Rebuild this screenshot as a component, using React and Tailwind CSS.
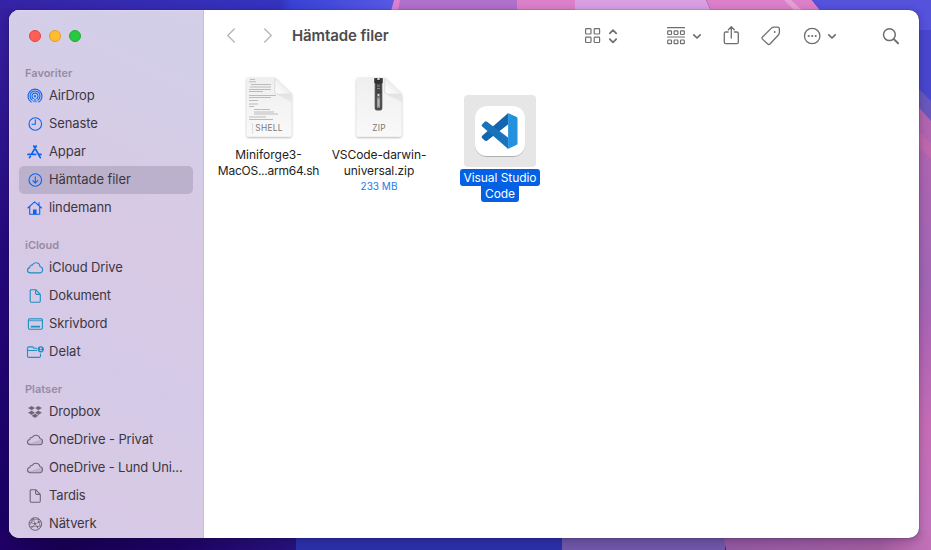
import React from "react";

function Wallpaper() {
  return (
    <svg className="absolute inset-0" width="931" height="550" viewBox="0 0 931 550">
      <defs>
        <linearGradient id="topBlue" x1="0" x2="1">
          <stop offset="0" stopColor="#3423a5" />
          <stop offset=".7" stopColor="#3533bf" />
          <stop offset=".73" stopColor="#3842d5" />
          <stop offset="1" stopColor="#5a5ae6" />
        </linearGradient>
        <linearGradient id="leftBlue" x1="0" x2="0" y1="0" y2="1">
          <stop offset="0" stopColor="#35209f" />
          <stop offset=".18" stopColor="#2f1792" />
          <stop offset=".45" stopColor="#25087c" />
          <stop offset="1" stopColor="#1a0060" />
        </linearGradient>
        <linearGradient id="bottomPurple" x1="0" x2="1">
          <stop offset="0" stopColor="#1f0066" />
          <stop offset=".2" stopColor="#180050" />
          <stop offset=".6" stopColor="#1d0361" />
          <stop offset="1" stopColor="#27127b" />
        </linearGradient>
        <linearGradient id="bottomPink" x1="0" x2="1">
          <stop offset="0" stopColor="#91589f" />
          <stop offset=".75" stopColor="#9f5c9d" />
          <stop offset="1" stopColor="#c371b8" />
        </linearGradient>
        <linearGradient id="rightPink" x1="0" x2="0" y1="0" y2="1">
          <stop offset="0" stopColor="#b464af" />
          <stop offset=".4" stopColor="#a166b5" />
          <stop offset=".5" stopColor="#ac64b4" />
          <stop offset=".72" stopColor="#c56cb5" />
          <stop offset="1" stopColor="#c173bd" />
        </linearGradient>
      </defs>
      <rect width="931" height="550" fill="#25107a" />
      <rect width="400" height="30" fill="url(#topBlue)" />
      <path d="M394 0h10l-6 30h-12z" fill="#dc80cf" />
      <path d="M400 0H517V30H395z" fill="#b070cb" />
      <path d="M517 0h60v30h-60z" fill="#dc80c9" />
      <path d="M575 0H706L720 30H575z" fill="#d8a0e3" />
      <path d="M706 0H812L836 30H720z" fill="#dc80c9" />
      <path d="M784 0h7l17 16h-8z" fill="#e5a0d6" />
      <path d="M812 0H931V130H915V30H836z" fill="#5552dc" />
      <path d="M915 30h16v100h-16z" fill="#4846cd" />
      <rect x="0" width="12" height="550" y="8" fill="url(#leftBlue)" />
      <path d="M915 85L931 101V550H915z" fill="#6858bd" />
      <path d="M915 103L931 121V550H915z" fill="url(#rightPink)" />
      <path d="M915 128l16 15v16l-16-16z" fill="#be67ad" />
      <rect y="530" width="297" height="20" fill="url(#bottomPurple)" />
      <rect x="296" y="530" width="267" height="20" fill="#2b30a7" />
      <rect x="562" y="530" width="163" height="20" fill="#7056a6" />
      <path d="M722 530H931V550H726z" fill="url(#bottomPink)" />
    </svg>
  );
}

const paths = {
  airdrop: (
    <>
      <path d="M4.2 14A7 7 0 1 1 11.8 14M5.2 12.1a5 5 0 1 1 5.6 0M6.2 10.5a3 3 0 1 1 3.6 0" />
      <circle cx="8" cy="8.2" r="1.1" fill="currentColor" stroke="none" />
      <path d="M8 9.5L5.6 14.3h4.8z" fill="currentColor" stroke="none" opacity=".55" />
    </>
  ),
  clock: (
    <>
      <circle cx="8.3" cy="8" r="6.3" />
      <path d="M8.3 3.8V8.3H5" />
    </>
  ),
  apps: (
    <g strokeWidth="1.7">
      <path d="M9.2 2L4.4 10.4M6.8 2l6.5 11.7M1 10.4h7.6M11.5 10.4H14M3.3 12.3l-.8 1.4" />
    </g>
  ),
  download: (
    <>
      <circle cx="8.3" cy="8" r="6.3" />
      <path d="M8.3 4.7v6.2M5.8 8.6l2.5 2.5 2.5-2.5" />
    </>
  ),
  home: (
    <>
      <path d="M.8 8L7.6 1.9 14.6 8M2.7 7v7.2h10V7M12 5.4V2.6" />
      <path d="M6 9.4h3.6v4.8H6z" fill="currentColor" stroke="none" />
    </>
  ),
  cloud: (
    <path d="M3.7 12.9C1.8 12.9.5 11.8.5 10.2c0-1.4 1-2.4 2.3-2.6C2.8 5.8 4 5 5.2 5.2 6 3.500 7.200 2.700 8.900 2.700c2.200 0 3.900 1.600 4 3.800 1.600.3 2.700 1.500 2.700 3.200 0 1.900-1.400 3.200-3.200 3.200z" />
  ),
  graycloud: (
    <>
      <path d="M3.700 12.700C1.800 12.700.5 11.700.5 10.100c0-1.400 1-2.400 2.400-2.600C3 6 4.100 5.100 5.400 5.300 6.200 3.700 7.500 3.200 8.900 3.200c2.100 0 3.600 1.300 3.900 3.300 1.600.2 2.700 1.400 2.700 3.100 0 1.900-1.300 3.100-3.100 3.100z" />
      <path d="M1.200 11.300C5 10.700 8 9.300 14.700 7.800l.2 2.500-1.500 1.900H3z" fill="currentColor" opacity=".22" stroke="none" />
    </>
  ),
  doc: (
    <path d="M4.400 1.700h4.300l4.600 4.600v6.700q0 1.200-1.200 1.200H4.400q-1.200 0-1.200-1.200V2.900q0-1.200 1.200-1.200zM8.600 1.900v3.300q0 1.200 1.200 1.200h3.300" />
  ),
  desktop: (
    <>
      <rect x="1.400" y="2.700" width="14" height="10.600" rx="1.200" />
      <path d="M1.700 4.500h13.500" strokeWidth="1.500" opacity=".65" />
      <path d="M4.500 10.700h7.800" strokeWidth="1.700" />
    </>
  ),
  shared: (
    <>
      <path d="M9.800 4.300H7L5.800 2.900H2q-1.500 0-1.500 1.500v7.500q0 1.500 1.500 1.500h10q1.500 0 1.500-1.500V10M.7 6.500h9" />
      <circle cx="13.800" cy="5.300" r="3.100" fill="currentColor" stroke="none" />
      <circle cx="13.800" cy="4.500" r=".9" fill="#d8cae6" stroke="none" />
      <path d="M12.200 6.900q1.600-1.600 3.200 0z" fill="#d8cae6" stroke="none" />
    </>
  ),
  dropbox: (
    <path
      d="M4.700 1.900L8 4.100 4.700 6.300.9 4.100zM11.300 1.900l3.800 2.200-3.800 2.200L8 4.100zM4.700 6.500L8 8.700l-3.300 2.200L.9 8.700zM11.300 6.500l3.800 2.200-3.800 2.200L8 8.700zM4.500 11.700L8 9.500l3.500 2.200L8 14z"
      fill="currentColor"
      stroke="#d8cae6"
      strokeWidth=".25"
    />
  ),
  network: (
    <>
      <circle cx="8.300" cy="8" r="6.300" strokeWidth="1" />
      <path d="M2.400 6.300L8 7.800l5.800-2.300M8 7.800L6.200 2.100M8 7.800l3.600 5.200M8 7.800L4.200 12.500M4.400 3.200l7.600.2M3.300 10.700l10.600-.5M6.300 2.300L3 8.500M11.300 2.800l1.900 8" strokeWidth=".65" />
      <g fill="currentColor" stroke="none">
        <circle cx="8" cy="7.800" r="1.100" />
        <circle cx="5" cy="5" r=".8" />
        <circle cx="11.500" cy="5.800" r=".9" />
        <circle cx="10.500" cy="10.800" r=".9" />
        <circle cx="5" cy="10.600" r=".8" />
      </g>
    </>
  ),
};

function SideIcon({ name, color }) {
  return (
    <svg
      className={`shrink-0 overflow-visible ${color}`}
      width="16"
      height="16"
      viewBox="0 0 16 16"
      fill="none"
      stroke="currentColor"
      strokeWidth="1.1"
      strokeLinecap="round"
      strokeLinejoin="round"
    >
      {paths[name]}
    </svg>
  );
}

const sections = [
  {
    title: "Favoriter",
    color: "text-[#0a64f0]",
    items: [
      ["airdrop", "AirDrop", "tracking-[-0.25px]"],
      ["clock", "Senaste", "tracking-[-0.1px]"],
      ["apps", "Appar", "tracking-[-0.1px]"],
      ["download", "Hämtade filer", "tracking-[-0.08px]"],
      ["home", "lindemann", "tracking-[-0.1px]"],
    ],
  },
  {
    title: "iCloud",
    color: "text-[#1d8fc0]",
    items: [
      ["cloud", "iCloud Drive", "tracking-[-0.12px]"],
      ["doc", "Dokument", "tracking-[-0.13px]"],
      ["desktop", "Skrivbord", "tracking-[-0.12px]"],
      ["shared", "Delat", "tracking-normal"],
    ],
  },
  {
    title: "Platser",
    color: "text-[#6d6574]",
    items: [
      ["dropbox", "Dropbox", "tracking-[-0.12px]"],
      ["graycloud", "OneDrive - Privat", "tracking-[-0.12px]"],
      ["graycloud", "OneDrive - Lund Uni...", "tracking-[-0.15px]"],
      ["doc", "Tardis", "tracking-[-0.15px]"],
      ["network", "Nätverk", "tracking-[-0.15px]"],
    ],
  },
];

function Sidebar() {
  return (
    <aside className="h-full w-[195px] shrink-0 overflow-hidden border-r border-[#c9bdd3] bg-[linear-gradient(205deg,#d2cfe7_0%,#d5cde7_22%,#d8c9e4_42%,#d4cae8_65%,#d8cae5_82%,#d5c9e5_100%)] shadow-[inset_1px_1px_0_#e0d5ee]">
      <div className="flex h-[54px] gap-2 pl-5 pt-5">
        <span className="size-3 rounded-full border border-[#e0443e] bg-[#ff5f57]" />
        <span className="size-3 rounded-full border border-[#e0a028] bg-[#febc2e]" />
        <span className="size-3 rounded-full border border-[#1dad2b] bg-[#28c840]" />
      </div>
      {sections.map((s, i) => (
        <section key={s.title} className={i ? "pt-3.5" : ""}>
          <h2 className="h-[18px] pl-4 text-[11px] font-semibold leading-[18px] text-[#968ba4]">{s.title}</h2>
          <ul>
            {s.items.map(([icon, label, tracking]) => (
              <li
                key={label}
                className={`mx-2.5 flex h-7 items-center gap-1.5 rounded-[5px] pl-2 text-[13px] text-[#3c3742] ${
                  label === "Hämtade filer" ? "bg-[#bbb1cd]" : ""
                }`}
              >
                <SideIcon name={icon} color={s.color} />
                <span className={`whitespace-nowrap ${tracking}`}>{label}</span>
              </li>
            ))}
          </ul>
        </section>
      ))}
    </aside>
  );
}

function Glyph({ w, h = 20, className = "", sw = 1.3, children }) {
  return (
    <svg
      className={`shrink-0 overflow-visible ${className}`}
      width={w}
      height={h}
      viewBox={`0 0 ${w} ${h}`}
      fill="none"
      stroke="currentColor"
      strokeWidth={sw}
      strokeLinecap="round"
      strokeLinejoin="round"
    >
      {children}
    </svg>
  );
}

function Toolbar() {
  const small = [0.7, 7.1, 13.5];
  return (
    <header className="flex h-[51px] items-center pl-[23px] text-[#6e6e6e]">
      <Glyph w={8} className="text-[#b9b9b9]" sw={1.5}>
        <path d="M7.300 3L.7 9.500 7.300 16" />
      </Glyph>
      <Glyph w={8} className="ml-[29px] text-[#b9b9b9]" sw={1.5}>
        <path d="M.7 3L7.300 9.500.7 16" />
      </Glyph>
      <h1 className="ml-5 w-[293px] pt-0.5 text-[15px] font-semibold tracking-[-0.1px] text-[#4c4c4c]">Hämtade filer</h1>
      <Glyph w={16} sw={1.2}>
        <rect x=".6" y="2.600" width="5.400" height="5.400" rx=".8" />
        <rect x="9.200" y="2.600" width="5.400" height="5.400" rx=".8" />
        <rect x=".6" y="11.100" width="5.400" height="5.400" rx=".8" />
        <rect x="9.200" y="11.100" width="5.400" height="5.400" rx=".8" />
      </Glyph>
      <Glyph w={8} className="ml-2" sw={1.7}>
        <path d="M.8 7.300L4 4.100l3.200 3.200M.8 13.100L4 16.300l3.200-3.200" />
      </Glyph>
      <Glyph w={18} className="ml-[50px]" sw={1.2}>
        <path d="M.5 1.700h17M.5 11h17" />
        {small.map((x) => (
          <g key={x}>
            <rect x={x} y="4.900" width="3.800" height="3.600" rx=".7" />
            <rect x={x} y="14" width="3.800" height="3.600" rx=".7" />
          </g>
        ))}
      </Glyph>
      <Glyph w={8} className="ml-2" sw={1.7}>
        <path d="M.8 8.800L4 12l3.200-3.200" />
      </Glyph>
      <Glyph w={16} className="ml-[22px]" sw={1.3}>
        <path d="M5.200 6H2.800Q1.300 6 1.300 7.500v8.700q0 1.500 1.500 1.500h11q1.500 0 1.500-1.500V7.500Q15.300 6 13.800 6h-2.400M8.300 12V.8M5.300 3.700l3-3 3 3" />
      </Glyph>
      <Glyph w={20} className="ml-[22px]" sw={1.3}>
        <path d="M1.500 11L10.400 2.100Q11.400 1.100 12.800 1.100h3.700q1.900 0 1.900 1.900v3.500q0 1.400-1 2.500L8.900 18q-1.100 1-2.200 0L1.500 13.100q-1.100-1.100 0-2.100z" />
        <circle cx="13.700" cy="6" r=".9" fill="currentColor" stroke="none" />
      </Glyph>
      <Glyph w={18} className="ml-[22px]" sw={1.3}>
        <circle cx="9.200" cy="10" r="7.700" />
        <g fill="currentColor" stroke="none">
          <circle cx="5.700" cy="10" r="1.100" />
          <circle cx="9.200" cy="10" r="1.100" />
          <circle cx="12.700" cy="10" r="1.100" />
        </g>
      </Glyph>
      <Glyph w={8} className="ml-[7px]" sw={1.7}>
        <path d="M.8 8.800L4 12l3.200-3.200" />
      </Glyph>
      <Glyph w={18} className="ml-[46px]" sw={1.5}>
        <circle cx="7.400" cy="8.700" r="5.900" />
        <path d="M11.800 13.100l4.300 4.200" strokeWidth="1.900" />
      </Glyph>
    </header>
  );
}

const codeLines = [
  [4, 2, 5], [3, 4.3, 7], [5, 7, 20], [4, 9.5, 21], [3, 12, 22], [3, 14, 14],
  [3, 18, 27], [3, 20, 22], [3, 23, 9], [3, 26.5, 9], [3, 29, 5], [8, 32, 16],
  [8, 34.5, 20], [8, 36.5, 24], [3, 39.5, 17], [3, 42, 24],
];

function DocPage({ id, kind, children }) {
  return (
    <svg width="50" height="64" viewBox="0 0 50 64" className="overflow-visible">
      <defs>
        <linearGradient id={`${id}-page`} x1="0" x2="0" y1="0" y2="1">
          <stop offset="0" stopColor="#efefef" />
          <stop offset="1" stopColor="#f9f9f9" />
        </linearGradient>
        <linearGradient id={`${id}-fold`} x1="0" x2="1" y1="1" y2="0">
          <stop offset="0" stopColor="#fff" />
          <stop offset=".5" stopColor="#f0f0f0" />
          <stop offset="1" stopColor="#cfcfcf" />
        </linearGradient>
        <filter id={`${id}-shadow`} x="-20%" y="-20%" width="140%" height="140%">
          <feDropShadow dx="0" dy=".7" stdDeviation=".8" floodOpacity=".38" />
        </filter>
      </defs>
      <path
        d="M4.500 2H31L47.500 18V59q0 1.800-1.800 1.800H4.500Q2.700 60.800 2.700 59V3.800Q2.700 2 4.500 2z"
        fill={`url(#${id}-page)`}
        filter={`url(#${id}-shadow)`}
      />
      {children}
      <path d="M30 2L47.500 19V26L30 17z" fill="#ccc" opacity=".35" />
      <path d="M31 2v12.500q0 3.500 3.500 3.500h13z" fill={`url(#${id}-fold)`} stroke="#dadada" strokeWidth=".5" />
      <text x="25" y="54.700" textAnchor="middle" fontSize="8.300" letterSpacing=".3" fill="#777">
        {kind}
      </text>
    </svg>
  );
}

function ShellIcon() {
  return (
    <DocPage id="shell" kind="SHELL">
      <g stroke="#aaa" strokeWidth=".9" opacity=".85">
        {codeLines.map(([x, y, w]) => (
          <path key={y} d={`M${x + 2} ${y + 1.5}h${w}`} />
        ))}
      </g>
      <path d="M8.500 47v11" stroke="#ddd" strokeWidth="1" />
    </DocPage>
  );
}

function ZipIcon() {
  return (
    <DocPage id="zip" kind="ZIP">
      <path d="M20.700 2h7.600v29.500q0 3-2 3h-3.600q-2 0-2-3z" fill="#555" />
      <path d="M24.500 2v13" stroke="#222" strokeWidth="4" />
      <path d="M24.500 3v12" stroke="#aaa" strokeWidth="3" strokeDasharray="1 1.2" />
      <path d="M20.300 2l4.200 3 4.200-3v5l-4.200 1.500L20.300 7z" fill="#333" />
      <path d="M23 2h3l-1.500 1.500z" fill="#eee" />
      <path d="M21.500 13h6v4h-6z" fill="#444" />
      <path d="M22.300 17h4.400v15.500h-4.400z" fill="#888" stroke="#333" strokeWidth=".7" />
      <circle cx="24.500" cy="19" r="1.600" fill="#ddd" stroke="#333" strokeWidth=".7" />
      <path d="M24.500 23v7.500" stroke="#b9b9b9" strokeWidth="1.800" />
    </DocPage>
  );
}

function CodeIcon() {
  return (
    <div className="flex size-[72px] items-center justify-center rounded-[4px] bg-[#e6e6e6]">
      <svg width="54" height="54" viewBox="0 0 54 54" className="overflow-visible">
        <defs>
          <filter id="tile-shadow" x="-20%" y="-20%" width="140%" height="140%">
            <feDropShadow dx="0" dy=".7" stdDeviation=".7" floodOpacity=".35" />
          </filter>
        </defs>
        <rect x="2" y="2" width="50" height="50" rx="12" fill="#fff" filter="url(#tile-shadow)" />
        <path d="M9.200 34.200q-1.300-1.200 0-2.400L35 9.300V20.500L14 36.700q-1.200.8-2.300-.1z" fill="#1265ae" />
        <path d="M9.200 20.200q-1.300 1.200 0 2.400L35 44.700V33.500L14 17.700q-1.200-.8-2.300.1z" fill="#1873bd" />
        <path d="M34 9.500q.8-.5 1.900-.1L43.300 12.700q1.200.5 1.200 1.700V39.400q0 1.200-1.200 1.700L35.900 44.500q-1.100.4-1.900-.2 1.100.1 1.100-1.100V10.700q0-1.200-1.100-1.200z" fill="#2491de" />
      </svg>
    </div>
  );
}

export default function App() {
  return (
    <div className="relative h-[550px] w-[931px] overflow-hidden pl-[9px] pt-2.5 font-['Inter','Liberation_Sans',sans-serif]">
      <Wallpaper />
      <div className="relative flex h-[528px] w-[910px] overflow-hidden rounded-[10px] bg-white shadow-[0_0_1px_#201040,0_2px_8px_rgba(20,10,45,0.3)]">
        <Sidebar />
        <main className="min-w-0 flex-1">
          <Toolbar />
          <div className="flex items-start pl-[9px] text-center text-[12px] leading-4 text-[#222]">
            <div className="flex w-[111px] flex-col items-center pt-[15px]">
              <ShellIcon />
              <p className="mt-[7px] whitespace-nowrap">
                Miniforge3-
                <br />
                <span className="tracking-[-0.25px]">MacOS...arm64.sh</span>
              </p>
            </div>
            <div className="flex w-[110px] flex-col items-center pt-[15px]">
              <ZipIcon />
              <p className="mt-[7px] whitespace-nowrap tracking-[-0.08px]">
                VSCode-darwin-
                <br />
                universal.zip
              </p>
              <p className="text-[10px] leading-[14px] text-[#1f7ae6]">233 MB</p>
            </div>
            <div className="ml-[13px] flex w-[106px] flex-col items-center pt-[34px]">
              <CodeIcon />
              <p className="mt-0.5 flex flex-col items-center whitespace-nowrap tracking-[-0.06px] text-white">
                <span className="h-[17px] rounded-[3px] bg-[#0461e3] px-[3.5px] leading-[17px]">Visual Studio</span>
                <span className="h-4 rounded-b-[3px] bg-[#0461e3] px-1 leading-[15px]">Code</span>
              </p>
            </div>
          </div>
        </main>
      </div>
    </div>
  );
}
